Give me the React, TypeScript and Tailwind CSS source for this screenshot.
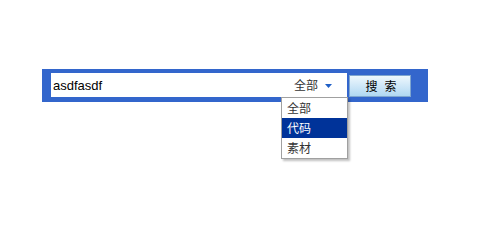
import { useState } from "react"

const options = ["全部", "代码", "素材"]

export default function App() {
  const [query, setQuery] = useState("asdfasdf")
  const [active] = useState(1)

  return (
    <div className="min-h-[217px] bg-white pt-[69px] pl-[42px]">
      {/* search bar */}
      <div className="flex w-[386px] h-[33px] items-start bg-[#3366cc] pl-[9px] pt-[4px]">
        <div className="relative flex w-[296px] h-[24px] items-center bg-white">
          <input
            value={query}
            onChange={(e) => setQuery(e.target.value)}
            className="h-full min-w-0 flex-1 bg-transparent pl-[2px] text-[13px] text-black outline-none font-['Liberation_Sans',Arial,sans-serif]"
          />
          <div className="relative flex h-full w-[66px] items-center pl-[13px] text-[12px] text-[#333] font-['Noto_Sans_CJK_SC',sans-serif]">
            <span>全部</span>
            <svg width="7" height="4" viewBox="0 0 7 4" className="ml-[7px] mt-[2px]">
              <polygon points="0,0 7,0 3.5,4" fill="#1f5fc6" />
            </svg>

            {/* dropdown */}
            <ul className="absolute left-0 top-full z-10 w-[67px] border border-[#a0a0a0] bg-white shadow-[2px_2px_2px_rgba(0,0,0,0.25)]">
              {options.map((o, i) => (
                <li
                  key={o}
                  className={
                    i === active
                      ? "flex h-[20px] items-center pl-[5px] text-[12px] bg-[#003399] text-white"
                      : "flex h-[20px] items-center pl-[5px] text-[12px] text-[#333]"
                  }
                >
                  {o}
                </li>
              ))}
            </ul>
          </div>
        </div>
        <button className="ml-[2px] mt-[2px] flex h-[22px] w-[62px] items-center justify-center gap-[7px] border border-[#7fa6cf] bg-gradient-to-b from-[#eef7fd] to-[#b0d8f2] pl-[2px] text-[12px] text-black font-['Noto_Sans_CJK_SC',sans-serif]">
          <span>搜</span>
          <span>索</span>
        </button>
      </div>
    </div>
  )
}
